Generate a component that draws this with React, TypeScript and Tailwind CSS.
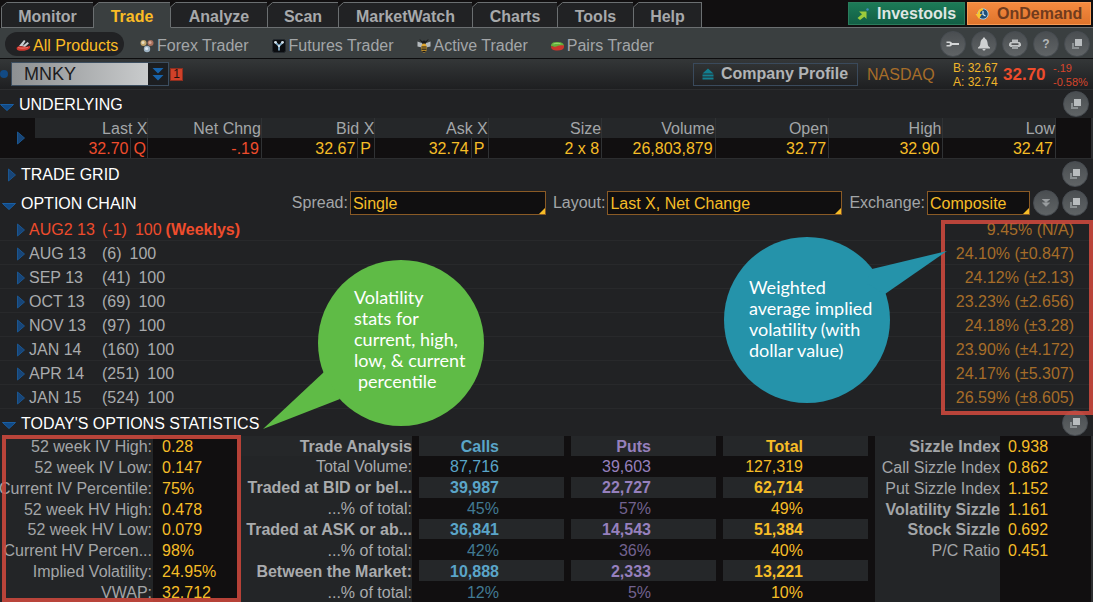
import React from "react";
import clsx from "clsx";

const tabs = [
  { name: "Monitor", width: "w-[92px]" },
  { name: "Trade", width: "w-[77px]", active: true },
  { name: "Analyze", width: "w-[97px]" },
  { name: "Scan", width: "w-[71px]" },
  { name: "MarketWatch", width: "w-[134px]" },
  { name: "Charts", width: "w-[85px]" },
  { name: "Tools", width: "w-[76px]" },
  { name: "Help", width: "w-[68px]" },
];

const quotes = [
  { name: "Last X", value: "32.70", exchange: "Q", down: true },
  { name: "Net Chng", value: "-.19", down: true },
  { name: "Bid X", value: "32.67", exchange: "P" },
  { name: "Ask X", value: "32.74", exchange: "P" },
  { name: "Size", value: "2 x 8" },
  { name: "Volume", value: "26,803,879" },
  { name: "Open", value: "32.77" },
  { name: "High", value: "32.90" },
  { name: "Low", value: "32.47" },
];

const chain = [
  { month: "AUG2 13", days: "(-1)", iv: "9.45% (N/A)", weekly: true },
  { month: "AUG 13", days: "(6)", iv: "24.10% (±0.847)" },
  { month: "SEP 13", days: "(41)", iv: "24.12% (±2.13)" },
  { month: "OCT 13", days: "(69)", iv: "23.23% (±2.656)" },
  { month: "NOV 13", days: "(97)", iv: "24.18% (±3.28)" },
  { month: "JAN 14", days: "(160)", iv: "23.90% (±4.172)" },
  { month: "APR 14", days: "(251)", iv: "24.17% (±5.307)" },
  { month: "JAN 15", days: "(524)", iv: "26.59% (±8.605)" },
];

const volatility = [
  ["52 week IV High:", "0.28"],
  ["52 week IV Low:", "0.147"],
  ["Current IV Percentile:", "75%"],
  ["52 week HV High:", "0.478"],
  ["52 week HV Low:", "0.079"],
  ["Current HV Percen...", "98%"],
  ["Implied Volatility:", "24.95%"],
  ["VWAP:", "32.712"],
];

const trades = [
  { label: "Total Volume:", calls: "87,716", puts: "39,603", total: "127,319" },
  { label: "Traded at BID or bel...", calls: "39,987", puts: "22,727", total: "62,714", bold: true },
  { label: "...% of total:", calls: "45%", puts: "57%", total: "49%", dim: true },
  { label: "Traded at ASK or ab...", calls: "36,841", puts: "14,543", total: "51,384", bold: true },
  { label: "...% of total:", calls: "42%", puts: "36%", total: "40%", dim: true },
  { label: "Between the Market:", calls: "10,888", puts: "2,333", total: "13,221", bold: true },
  { label: "...% of total:", calls: "12%", puts: "5%", total: "10%", dim: true },
];

const sizzle = [
  { label: "Sizzle Index", value: "0.938", bold: true },
  { label: "Call Sizzle Index", value: "0.862" },
  { label: "Put Sizzle Index", value: "1.152" },
  { label: "Volatility Sizzle", value: "1.161", bold: true },
  { label: "Stock Sizzle", value: "0.692", bold: true },
  { label: "P/C Ratio", value: "0.451" },
  { label: "", value: "" },
  { label: "", value: "" },
];

const Arrow = ({ down }: { down?: boolean }) =>
  down ? (
    <svg className="mt-1 h-[7px] w-[14px] shrink-0" viewBox="0 0 14 7">
      <path d="M0.5 0.5h13L7 6.5z" fill="#114a86" stroke="#1a5fa3" />
    </svg>
  ) : (
    <svg className="h-[14px] w-2 shrink-0" viewBox="0 0 8 14">
      <path d="M0.5 1v12L7.5 7z" fill="#184577" stroke="#1a5690" />
    </svg>
  );

const RoundButton = ({ label, children }: { label: string; children: React.ReactNode }) => (
  <button
    aria-label={label}
    className="flex size-[26px] shrink-0 items-center justify-center rounded-full border border-[#484d52] bg-linear-to-b from-[#4a4e51] to-[#606466]"
  >
    {children}
  </button>
);

const DetachIcon = () => (
  <svg className="size-3" viewBox="0 0 12 12">
    <path d="M1 5h2v4h5v2H1z" fill="#8b9092" />
    <path d="M4 1h7v7H4z" fill="#b9bdbf" />
  </svg>
);

const Detach = () => (
  <RoundButton label="Detach">
    <DetachIcon />
  </RoundButton>
);

const SectionTitle = ({ title, closed }: { title: string; closed?: boolean }) => (
  <h2>
    <button className="flex items-center gap-[5px] pt-0.5 whitespace-nowrap text-white">
      <span className="flex w-[14px] justify-end">
        <Arrow down={!closed} />
      </span>
      {title}
    </button>
  </h2>
);

const Picker = ({ id, label, value, width }: { id: string; label: string; value: string; width: string }) => (
  <div className="flex items-center">
    <label htmlFor={id} className="pr-0.5 text-[#a3a6a8]">
      {label}
    </label>
    <span className={clsx("relative flex", width)}>
      <select
        id={id}
        className="h-6 w-full appearance-none border border-[#8a5a25] bg-[#100f10] pt-0.5 pl-0.5 text-[#f6bd27] outline-none"
      >
        <option>{value}</option>
      </select>
      <svg className="pointer-events-none absolute right-px bottom-px size-[6px]" viewBox="0 0 6 6">
        <path d="M6 0v6H0z" fill="#f6bd27" />
      </svg>
    </span>
  </div>
);

const productLinks = [
  {
    name: "Forex Trader",
    icon: (
      <svg className="size-[14px]" viewBox="0 0 14 14">
        <circle cx="3.5" cy="4" r="3" fill="#c2a66c" />
        <circle cx="3" cy="3.5" r="1.5" fill="#e6dcc0" />
        <circle cx="10.5" cy="4" r="3" fill="#a8705c" />
        <circle cx="10" cy="3.5" r="1.5" fill="#d3a898" />
        <circle cx="7" cy="10" r="3.2" fill="#9fb4c4" />
        <circle cx="6.6" cy="9.5" r="1.6" fill="#dde7ef" />
      </svg>
    ),
  },
  {
    name: "Futures Trader",
    icon: (
      <svg className="size-[14px]" viewBox="0 0 14 14">
        <rect x="0.5" y="0.5" width="13" height="13" rx="2" fill="#0b0d10" stroke="#23282d" />
        <path d="M3.5 3.5L7 7l3.5-3.5M7 7v4.5" stroke="#7fa9c4" strokeWidth="1.8" fill="none" />
        <circle cx="3.5" cy="3.3" r="1.4" fill="#d3e0e8" />
        <circle cx="10.5" cy="3.3" r="1.4" fill="#d3e0e8" />
        <circle cx="7" cy="7" r="1.1" fill="#e8eef2" />
      </svg>
    ),
  },
  {
    name: "Active Trader",
    icon: (
      <svg className="size-[14px]" viewBox="0 0 14 14">
        <path d="M5 3L3 0.5M9 3l2-2.5" stroke="#111" strokeWidth="0.9" />
        <path d="M6 4.500L0.500 2.500v5L5 8.500zM8 4.500l5.500-2v5L9 8.500z" fill="#b4babd" />
        <circle cx="7" cy="3.5" r="2" fill="#17181a" />
        <ellipse cx="7" cy="9" rx="2.8" ry="4.5" fill="#e0a52c" />
        <path d="M4.500 8h5M4.500 10.200h5M5.300 12.300h3.400" stroke="#17181a" strokeWidth="1.2" />
      </svg>
    ),
  },
  {
    name: "Pairs Trader",
    icon: (
      <svg className="h-[14px] w-[13px]" viewBox="0 0 13 14">
        <path d="M0 7C0 3.500 3 3 6 3s7 0.500 7 4.500L6 9z" fill="#62b03c" />
        <path d="M0 7c2 1 4 1 6 0.200s5-1 7-0.700c0.500 4-2 5-6.500 5S0 10.500 0 7z" fill="#c9352c" />
        <path d="M2.500 5c2-0.800 5-0.800 7-0.200" stroke="#a4d878" strokeWidth="0.9" fill="none" />
      </svg>
    ),
  },
];

const TabBar = () => (
  <header className="flex h-7 items-end bg-[#110f10] pl-px">
    <nav className="flex border-l border-[#6b6f71]">
      {tabs.map((tab) => (
        <button
          key={tab.name}
          className={clsx(
            "relative h-[26px] border-t border-r border-b border-[#6b6f71] pt-[3px] font-bold",
            tab.width,
            tab.active ? "border-b-[#3a3f40] bg-[#3a3f40] text-[#fbbc25]" : "bg-[#212224] text-[#a7a9ab]"
          )}
        >
          {/* cut corner */}
          <svg className="absolute -top-px -left-px size-[6px]" viewBox="0 0 6 6">
            <path d="M0 0h6L0 6z" fill="#110f10" />
            <path d="M0 5.5L5.5 0.500" stroke="#6b6f71" />
          </svg>
          {tab.name}
        </button>
      ))}
    </nav>
    <div className="flex h-[26px] flex-1 justify-end gap-0.5 border-b border-[#6b6f71] pr-0.5">
      <button className="flex h-[23px] w-[117px] items-center gap-2 border border-[#2a7c5c] bg-linear-to-b from-[#1c7a57] to-[#125f45] pl-2 font-bold text-[#dfe6e2]">
        <svg className="size-3" viewBox="0 0 12 12">
          <path d="M2 3.500h7.500V11L7.300 8.800 3 12 0.500 10 5 6.300z" fill="#9ccb3b" />
          <circle cx="10.500" cy="1.500" r="1.200" fill="#3f8fc0" />
        </svg>
        Investools
      </button>
      <button className="flex h-[23px] w-[124px] items-center gap-2 border border-[#f79a55] bg-linear-to-b from-[#f58a3f] to-[#df742c] pl-[7px] font-bold text-[#703b1d]">
        <svg className="size-[14px]" viewBox="0 0 14 14">
          <circle cx="8" cy="7" r="5.2" fill="#1f4f78" stroke="#a9cfe4" />
          <path d="M8 4v3.500l2.500 1.500" stroke="#d8ecf7" strokeWidth="1.2" fill="none" />
          <path d="M8 1.200C4.500 1.200 2.700 4 2.800 7H0.500l3.500 5 3-5H5c0-2 1-3.500 3-3.800z" fill="#f8c531" />
        </svg>
        OnDemand
      </button>
    </div>
  </header>
);

const ProductBar = () => (
  <div className="flex h-[31px] items-center border-b border-[#0d0d0e] bg-[#3a3f40] pt-0.5 pr-[3px] pl-[5px] text-[#a3a6a8]">
    <a href="#all" className="mr-4 flex h-6 w-[119px] items-center gap-0.5 rounded-full bg-[#212224] pt-1 pl-[11px] whitespace-nowrap text-[#fbbc25]">
      <svg className="h-[14px] w-[15px] shrink-0" viewBox="0 0 15 14">
        <path d="M3 7l5-6 1.500 1L6.500 7zM6 7.500l5.500-4.500 1.500 1.300L9 8z" fill="#c9ced1" />
        <path d="M0.800 8.500C2 6.800 4 7 7 7.500s5 0 7-0.800c0.800 1.800-0.500 3.500-3 4.300-3 1-7 1.200-9.200 0.300C0.700 10.800 0.400 9.500 0.800 8.500z" fill="#d3382e" />
        <path d="M2 8.600c3 0.900 7 0.700 10-0.300" stroke="#f0837a" strokeWidth="0.8" fill="none" />
      </svg>
      All Products
    </a>
    <nav className="flex gap-[23px] pt-1">
      {productLinks.map((link) => (
        <a key={link.name} href="#product" className="flex items-center gap-[3px] whitespace-nowrap">
          {link.icon}
          {link.name}
        </a>
      ))}
    </nav>
    <div className="ml-auto flex gap-[5px]">
      <RoundButton label="Settings">
        <svg className="size-[14px]" viewBox="0 0 14 14">
          <path d="M0.500 4.500h3.500a2.500 2.500 0 0 1 2 1.500h7v2H6a2.500 2.500 0 0 1-2 1.500H0.500V8H3a1 1 0 0 0 0-2H0.500z" fill="#d4d6d7" />
        </svg>
      </RoundButton>
      <RoundButton label="Alerts">
        <svg className="size-[14px]" viewBox="0 0 14 14">
          <path d="M7 0.500c0.800 0 1.200 0.500 1.200 1.300C10 2.500 10.500 4.500 10.700 7c0.100 1.500 0.800 2.500 2.300 3.500v1H1v-1C2.500 9.500 3.200 8.500 3.300 7c0.200-2.500 0.700-4.500 2.500-5.200C5.800 1 6.200 0.500 7 0.500zM5.500 12h3c0 1-0.700 1.500-1.500 1.500s-1.500-0.500-1.500-1.500z" fill="#cfd1d2" />
        </svg>
      </RoundButton>
      <RoundButton label="Print">
        <svg className="size-3" viewBox="0 0 12 12">
          <path d="M3 1.500h6V4H3z" fill="#b9bcbe" />
          <path d="M1.500 4h9L12 5.500v2L10.500 9h-9L0 7.500v-2z" fill="#c3c6c7" />
          <path d="M2.500 5.500h7v1.200h-7z" fill="#26282a" />
          <path d="M3 8h6v3H3z" fill="#9fa3a5" />
        </svg>
      </RoundButton>
      <RoundButton label="Help">
        <span className="text-xs font-bold text-[#b4b7b9]">?</span>
      </RoundButton>
      <Detach />
    </div>
  </div>
);

const SymbolBar = () => (
  <div className="flex h-[30px] items-center bg-linear-to-b from-[#343738] to-[#1e1f21] pr-1">
    <svg className="mr-[3px] h-3 w-2" viewBox="0 0 8 12">
      <circle cx="4" cy="6" r="4" fill="#124a84" />
    </svg>
    <div className="flex h-6 border border-[#3c4e60]">
      <input
        aria-label="Symbol"
        defaultValue="MNKY"
        className="w-[136px] bg-linear-to-r from-[#8d9092] to-[#c9cbcc] pl-3 text-lg text-[#1c1c1e] outline-none"
      />
      <button aria-label="Recent symbols" className="flex w-5 items-center justify-center bg-[#1c1e21]">
        <svg className="h-[14px] w-3" viewBox="0 0 12 14">
          <path d="M0.500 1h11L6 6.500zM0.500 8h11L6 13.500z" fill="#1763ab" />
        </svg>
      </button>
    </div>
    <button className="ml-px size-[13px] border border-[#8f2e1f] bg-[#cf4129] text-xs leading-[11px] text-[#1d1110]">1</button>
    <button className="ml-auto flex h-[23px] w-[165px] items-center gap-[7px] border border-[#3a4a5c] pl-2 font-bold whitespace-nowrap text-[#b1b3b5]">
      <svg className="size-3 shrink-0" viewBox="0 0 12 12">
        <path d="M6 0.500l5.500 5h-11zM0.500 6.500h11v2h-11zM0.500 9.500h11v2h-11z" fill="#127f90" />
      </svg>
      Company Profile
    </button>
    <span className="ml-[9px] w-[86px] pt-0.5 text-[#a66d29]">NASDAQ</span>
    <div className="w-[50px] pt-0.5 text-xs leading-[14px] whitespace-nowrap text-[#f0b52a]">
      <p>B: 32.67</p>
      <p>A: 32.74</p>
    </div>
    <span className="w-[50px] pt-0.5 text-[17px] font-bold text-[#ee4c2c]">32.70</span>
    <div className="w-9 pt-0.5 text-[11px] leading-[14px] text-[#d8452b]">
      <p>-.19</p>
      <p>-0.58%</p>
    </div>
  </div>
);

const Underlying = () => (
  <table className="w-full table-fixed border-separate border-spacing-0 border-b border-[#2c2d2f] bg-[#110f10] leading-[18px]">
    <thead>
      <tr className="h-5">
        <td rowSpan={2} className="w-[35px] pl-[17px]">
          <Arrow />
        </td>
        {quotes.map((q) => (
          <th key={q.name} className="border-r border-[#303234] bg-[#252729] p-0 pt-0.5 text-right font-normal text-[#a3a6a8]">
            {q.name}
          </th>
        ))}
        <td rowSpan={2} className="w-[37px] border-r-2 border-[#2c2e30]"></td>
      </tr>
      <tr className="h-5">
        {quotes.map((q) => (
          <td key={q.name} className={clsx("border-r border-[#303234] p-0", q.down ? "text-[#ee4c2c]" : "text-[#f6bd27]")}>
            <div className="flex justify-end">
              <span className="pt-0.5 pr-0.5">{q.value}</span>
              {q.exchange && <span className="w-[17px] border-l border-[#303234] pt-0.5 pl-0.5">{q.exchange}</span>}
            </div>
          </td>
        ))}
      </tr>
    </thead>
  </table>
);

const OptionChain = () => (
  <section className="relative">
    <div className="flex h-7 items-center justify-between pr-[5px] pl-0.5">
      <SectionTitle title="OPTION CHAIN" />
      <div className="flex items-center">
        <div className="flex gap-[7px]">
          <Picker id="spread" label="Spread:" value="Single" width="w-[196px]" />
          <Picker id="layout" label="Layout:" value="Last X, Net Change" width="w-[235px]" />
          <Picker id="exchange" label="Exchange:" value="Composite" width="w-[103px]" />
        </div>
        <div className="ml-[3px] flex gap-[3px]">
          <RoundButton label="More">
            <svg className="size-2" viewBox="0 0 8 8">
              <path d="M0 0h8L4 3.500zM0 3.500L4 7.500l4-4" fill="#9a9ea0" stroke="#9a9ea0" strokeWidth="0.5" />
            </svg>
          </RoundButton>
          <Detach />
        </div>
      </div>
    </div>
    <ul>
      {chain.map((row) => (
        <li
          key={row.month}
          className={clsx(
            "flex h-6 items-center border-b border-[#28292b] pt-0.5 pr-[19px] pl-[17px]",
            row.weekly ? "text-[#ee4c2c]" : "text-[#a9abad]"
          )}
        >
          <Arrow />
          <span className="ml-1 w-[73px]">{row.month}</span>
          <span className="mr-2">{row.days}</span>
          <span>100</span>
          {row.weekly && <b className="ml-1">(Weeklys)</b>}
          <span className="ml-auto text-[#a66d29]">{row.iv}</span>
        </li>
      ))}
    </ul>
    <div className="pointer-events-none absolute top-[31px] right-0 z-10 h-[195px] w-[152px] border-4 border-[#d34a3e]/85"></div>

    {/* callouts */}
    <div className="absolute top-[71px] left-[263px] z-20 h-[170px] w-[221px]">
      <svg className="absolute inset-0" viewBox="263 260 221 170">
        <circle cx="401" cy="343" r="83" fill="#5fbb46" />
        <path d="M263 429L324 372l16 27z" fill="#5fbb46" />
      </svg>
      <p className="absolute top-[27px] left-[91px] font-['Lato',sans-serif] text-lg leading-[21px] whitespace-nowrap text-white">
        Volatility
        <br />
        stats for
        <br />
        current, high,
        <br />
        low, &amp; current
        <br />
        <span className="pl-1">percentile</span>
      </p>
    </div>
    <div className="absolute top-12 right-[146px] z-20 h-[166px] w-[223px]">
      <svg className="absolute inset-0" viewBox="724 237 223 166">
        <circle cx="807" cy="320" r="83" fill="#2593aa" />
        <path d="M947 251l-75 18-6 14 19 11z" fill="#2593aa" />
      </svg>
      <p className="absolute top-10 left-[25px] font-['Lato',sans-serif] text-lg leading-[21px] whitespace-nowrap text-white">
        Weighted
        <br />
        average implied
        <br />
        volatility (with
        <br />
        dollar value)
      </p>
    </div>
  </section>
);

const Statistics = () => (
  <div className="relative flex bg-[#110f10] leading-[18px] whitespace-nowrap">
    <table className="h-[166px] w-[241px] table-fixed border-separate border-spacing-0">
      <tbody>
        {volatility.map(([label, value]) => (
          <tr key={label}>
            <th className="w-[153px] bg-[#232527] p-0 pt-0.5 pr-px text-right font-normal text-[#a3a6a8]">
              <div className="flex justify-end">{label}</div>
            </th>
            <td className="p-0 pt-0.5 pl-[9px] text-[#f6bd27]">{value}</td>
          </tr>
        ))}
      </tbody>
    </table>
    <div className="pointer-events-none absolute -top-px left-0.5 h-[167px] w-[239px] border-4 border-[#d34a3e]/85"></div>

    <div className="flex-1">
      <table className="h-[166px] w-full table-fixed border-separate border-spacing-0 text-right">
        <thead>
          <tr className="bg-[#252729]">
            <th className="w-[171px] p-0 pt-0.5 text-right text-[#a9abad]">Trade Analysis</th>
            <th className="border-l-[7px] border-[#110f10] p-0 pt-0.5 pr-[65px] text-right text-[#5aa5c8]">Calls</th>
            <th className="border-l-[7px] border-[#110f10] p-0 pt-0.5 pr-[65px] text-right text-[#9680bd]">Puts</th>
            <th className="border-l-[7px] border-[#110f10] p-0 pt-0.5 pr-[65px] text-right text-[#f6bd27]">Total</th>
          </tr>
        </thead>
        <tbody>
          {trades.map((row, i) => (
            <tr key={i} className={clsx(row.bold && "bg-[#252729] font-bold")}>
              <td className="bg-[#232527] p-0 pt-0.5 text-[#a9abad]">{row.label}</td>
              <td className={clsx("border-l-[7px] border-[#110f10] p-0 pt-0.5 pr-[65px]", row.dim ? "text-[#417a93]" : "text-[#5aa5c8]")}>
                {row.calls}
              </td>
              <td className={clsx("border-l-[7px] border-[#110f10] p-0 pt-0.5 pr-[65px]", row.dim ? "text-[#72628f]" : "text-[#9680bd]")}>
                {row.puts}
              </td>
              <td className="border-l-[7px] border-[#110f10] p-0 pt-0.5 pr-[65px] text-[#f6bd27]">{row.total}</td>
            </tr>
          ))}
        </tbody>
      </table>
    </div>

    <table className="ml-[7px] h-[166px] w-[218px] table-fixed border-separate border-spacing-0 border-r-2 border-[#2c2e30]">
      <tbody>
        {sizzle.map((row, i) => (
          <tr key={i} className="h-5">
            <th
              className={clsx(
                "w-[125px] bg-[#232527] p-0 pt-0.5 text-right text-[#a3a6a8]",
                row.bold ? "font-bold" : "font-normal"
              )}
            >
              {row.label}
            </th>
            <td className="p-0 pt-0.5 pl-2 text-[#f6bd27]">{row.value}</td>
          </tr>
        ))}
      </tbody>
    </table>
  </div>
);

const App = () => {
  return (
    <div className="min-h-screen overflow-hidden bg-[#212224] font-['Liberation_Sans',Arial,sans-serif] text-base leading-5">
      <TabBar />
      <ProductBar />
      <SymbolBar />
      <div className="flex h-[29px] items-center justify-between border-t border-[#2c2d2f] pr-1">
        <SectionTitle title="UNDERLYING" />
        <Detach />
      </div>
      <Underlying />
      <div className="flex h-[30px] items-center justify-between pr-[5px] pl-0.5">
        <SectionTitle title="TRADE GRID" closed />
        <Detach />
      </div>
      <OptionChain />
      <div className="flex h-[27px] items-center justify-between pr-[5px] pl-0.5">
        <SectionTitle title="TODAY'S OPTIONS STATISTICS" />
        <Detach />
      </div>
      <Statistics />
    </div>
  );
};

export default App;
